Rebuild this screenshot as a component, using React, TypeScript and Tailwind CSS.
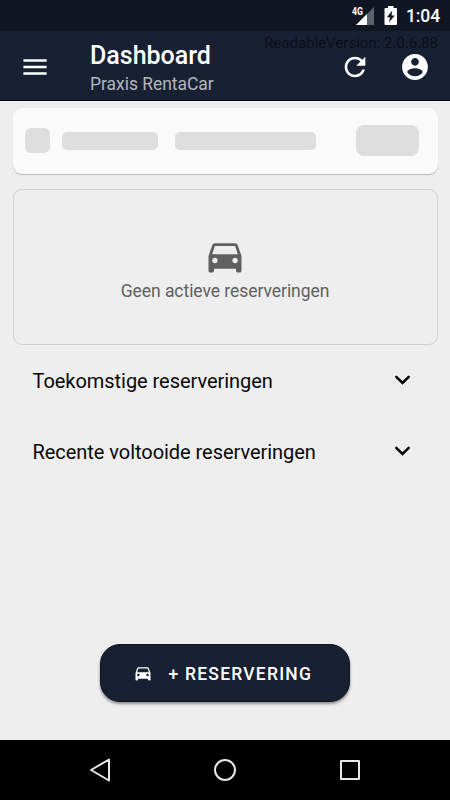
const Icon = ({ d, className, viewBox = "0 0 24 24" }: { d: string; className: string; viewBox?: string }) => (
  <svg viewBox={viewBox} fill="currentColor" className={`shrink-0 ${className}`}>
    <path d={d} />
  </svg>
);

const toolbarBox = "-0.4 -0.4 24.8 24.8";

const menu = "M3 18h18v-2H3v2zm0-5h18v-2H3v2zm0-7v2h18V6H3z";
const refresh =
  "M17.65 6.35C16.2 4.9 14.21 4 12 4c-4.42 0-7.99 3.58-7.99 8s3.57 8 7.99 8c3.73 0 6.84-2.55 7.73-6h-2.08c-.82 2.33-3.04 4-5.65 4-3.31 0-6-2.69-6-6s2.69-6 6-6c1.66 0 3.14.69 4.22 1.78L13 11h7V4l-2.35 2.35z";
const account =
  "M12 2C6.48 2 2 6.48 2 12s4.48 10 10 10 10-4.48 10-10S17.52 2 12 2zm0 3c1.66 0 3 1.34 3 3s-1.34 3-3 3-3-1.34-3-3 1.34-3 3-3zm0 14.2c-2.5 0-4.71-1.28-6-3.22.03-1.99 4-3.08 6-3.08 1.99 0 5.97 1.09 6 3.08-1.29 1.94-3.5 3.22-6 3.22z";
const car =
  "M18.92 6.01C18.72 5.42 18.16 5 17.5 5h-11c-.66 0-1.21.42-1.42 1.01L3 12v8c0 .55.45 1 1 1h1c.55 0 1-.45 1-1v-1h12v1c0 .55.45 1 1 1h1c.55 0 1-.45 1-1v-8l-2.08-5.99zM6.5 16c-.83 0-1.5-.67-1.5-1.5S5.67 13 6.5 13s1.5.67 1.5 1.5S7.33 16 6.5 16zm11 0c-.83 0-1.5-.67-1.5-1.5s.67-1.5 1.5-1.5 1.5.67 1.5 1.5-.67 1.5-1.5 1.5zM5 11l1.5-4.5h11L19 11H5z";

function StatusBar() {
  return (
    <div className="flex h-[31px] justify-end bg-[#111722] pr-[7px] text-white">
      <svg className="mt-[6px] h-[20px] w-[23px]" viewBox="0 0 23 20">
        <path d="M22 1V19H4Z" fill="#5b606b" />
        <path d="M15 8V19H4Z" fill="#fff" />
        <text x="0" y="9" fontSize="10.5" fontWeight="700" fill="#fff" textLength="11" lengthAdjust="spacingAndGlyphs" fontFamily="Roboto, sans-serif">4G</text>
      </svg>
      <svg className="mt-[6px] ml-[9px] h-[20px] w-[14px]" viewBox="0 0 14 20">
        <path d="M4 0H9.500V2H12Q13 2 13 3V18Q13 19 12 19H1.500Q.5 19 .5 18V3Q.5 2 1.500 2H4Z" fill="#fff" />
        <path d="M8.300 4.500 2.800 11.200H6L5 16.500 10.700 9.500H7.500Z" fill="#111722" />
      </svg>
      <span className="ml-[8px] w-[37px] pt-[6px] text-[17.500px] leading-[21px] font-medium tracking-[-0.100px] whitespace-nowrap">1:04</span>
    </div>
  );
}

function Header() {
  return (
    <header className="relative flex h-[70px] border-b border-black bg-[#182033] text-white">
      <Icon d={menu} viewBox={toolbarBox} className="mt-[20px] ml-[19px] size-[32px]" />
      <div className="ml-[39px] flex-1">
        <h1 className="mt-[10px] text-[25px] leading-[30px] font-medium">Dashboard</h1>
        <p className="mt-[2px] text-[17.500px] leading-[22px] tracking-[-0.040px] text-[#b3b6bb]">Praxis RentaCar</p>
      </div>
      <Icon d={refresh} viewBox={toolbarBox} className="mt-[20px] size-[32px]" />
      <Icon d={account} viewBox={toolbarBox} className="mt-[20px] mr-[19px] ml-[28px] size-[32px]" />
      <span className="absolute top-[2px] right-[12px] text-[15px] leading-[20px] whitespace-nowrap text-[#0b0f18]">
        ReadableVersion: 2.0.6.88
      </span>
    </header>
  );
}

function Section({ title }: { title: string }) {
  return (
    <div className="flex h-[71px] items-center justify-between pr-[39px] pl-[32.500px]">
      <span className="text-[20px] leading-[26px] tracking-[-0.045px] whitespace-nowrap">{title}</span>
      <svg className="mb-[3px] h-[10px] w-[18px]" viewBox="0 0 18 10" fill="none" stroke="currentColor" strokeWidth="2.500" strokeLinecap="round" strokeLinejoin="miter">
        <path d="M3.300 1.800 9.500 8 15.700 1.800" />
      </svg>
    </div>
  );
}

export default function App() {
  return (
    <div className="flex h-[800px] w-[450px] flex-col overflow-hidden bg-[#eeeeee] font-['Roboto',sans-serif] text-[#080808]">
      <StatusBar />
      <Header />
      <main className="flex flex-1 flex-col">
        <div className="mx-[12.500px] mt-[6.500px] flex h-[66.500px] items-center rounded-[9px] bg-[#fafafa] pr-[18.500px] pl-[12.500px] shadow-[0_1px_1px_rgba(0,0,0,0.22)]">
          <div className="size-[25px] rounded-[6px] bg-[#dedede]" />
          <div className="ml-[12px] h-[18px] w-[95.500px] rounded-[5px] bg-[#dedede]" />
          <div className="ml-[17.500px] h-[18px] w-[141px] rounded-[5px] bg-[#dedede]" />
          <div className="ml-auto h-[31px] w-[63px] rounded-[8px] bg-[#dedede]" />
        </div>
        <div className="mx-[12.500px] mt-[15px] flex h-[156px] flex-col items-center rounded-[9px] border border-[#cfcfcf] text-[#606060]">
          <Icon d={car} className="mt-[44px] size-[44px]" />
          <span className="mt-[2px] text-[17.500px] leading-[22px] tracking-[-0.050px] whitespace-nowrap">Geen actieve reserveringen</span>
        </div>
        <div className="mt-[0.500px] flex flex-col">
          <Section title="Toekomstige reserveringen" />
          <Section title="Recente voltooide reserveringen" />
        </div>
        <button className="mx-auto mt-auto mb-[38px] flex h-[58px] w-[250px] items-center rounded-[20px] border border-[#0d1322] bg-[#182033] pl-[32px] text-white shadow-[0_2px_3px_rgba(0,0,0,0.4)]">
          <Icon d={car} className="size-[20px]" />
          <span className="ml-[15.500px] pt-px text-[17.500px] leading-[22px] font-medium tracking-[1.220px] whitespace-nowrap">+ RESERVERING</span>
        </button>
      </main>
      <nav className="flex h-[60px] items-center justify-between bg-black px-[88px] text-[#e8e8e8]">
        <svg className="size-[24px]" viewBox="0 0 24 24" fill="none" stroke="currentColor" strokeWidth="2" strokeLinejoin="round">
          <path d="M21 1.500V22.500L3 12Z" />
        </svg>
        <svg className="size-[24px]" viewBox="0 0 24 24" fill="none" stroke="currentColor" strokeWidth="2">
          <circle cx="12" cy="12" r="10" />
        </svg>
        <svg className="size-[24px]" viewBox="0 0 24 24" fill="none" stroke="currentColor" strokeWidth="2" strokeLinejoin="round">
          <path d="M3 3H21V21H3Z" />
        </svg>
      </nav>
    </div>
  );
}
